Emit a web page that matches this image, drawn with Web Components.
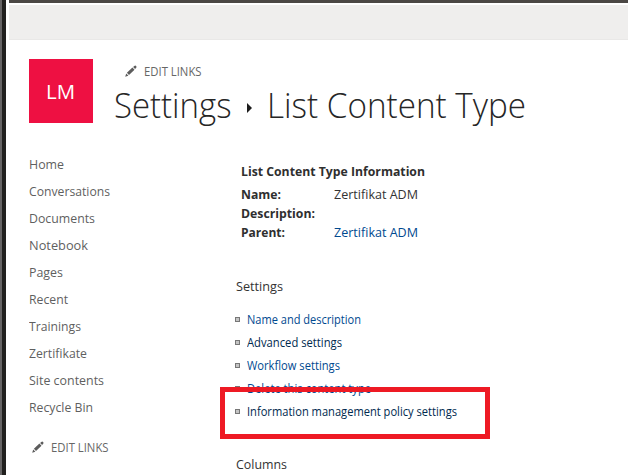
<!DOCTYPE html>
<html lang="en">
<head>
<meta charset="utf-8">
<title>List Content Type</title>
<style>
html,body{margin:0;height:100%;overflow:hidden;background:#fff}
body{font-family:"Open Sans","Noto Sans",sans-serif;font-size:12.8px;color:#333}
</style>
</head>
<body>
<settings-page></settings-page>
<script>
const define=(name,html,init)=>customElements.define(name,class extends HTMLElement{
  connectedCallback(){
    if(this.shadowRoot)return;
    this.attachShadow({mode:'open'}).innerHTML=html;
    if(init)init(this,this.shadowRoot);
  }
});

/* Text condensed or widened to an exact width */
define('fit-text',`<style>
:host{display:block;white-space:nowrap}
span{display:inline-block;transform-origin:0 50%}
</style><span><slot></slot></span>`,(el,root)=>{
  const w=+el.getAttribute('w'),s=root.querySelector('span');
  el.style.width=w+'px';
  s.style.transform='scaleX('+w/s.getBoundingClientRect().width+')';
});

define('edit-links',`<style>
:host{display:flex;align-items:center;height:16px;line-height:16px;font-size:11.8px;color:#666}
svg{display:block;width:12px;height:12px;margin-right:7px;flex:none}
</style>
<svg viewBox="0 0 12 12" fill="#5c5c5c"><path d="M0.2 11.7 1.2 8.5 3.4 10.8ZM1.9 7.8 7.4 2.6 9.5 4.7 4 10.1ZM8.1 2 9.3 0.9Q10.2 0.1 11.1 0.9 12 1.8 11.2 2.7L10.1 4Z"/></svg>
<fit-text w="57.5">EDIT LINKS</fit-text>`);

define('site-logo',`<style>
:host{display:flex;width:64px;height:64px;background:#ee1042;color:#fff;font-size:20.5px;line-height:64px;justify-content:center;flex:none;box-sizing:border-box;padding-right:2px}
</style><fit-text w="29">LM</fit-text>`);

define('window-edge',`<style>
:host{display:flex;width:9px;flex:none}
i:nth-child(1){width:3px;background:#11051a}
i:nth-child(2){width:2px;background:#666465}
i:nth-child(3){width:4px;background:#21201f}
</style><i></i><i></i><i></i>`);

define('top-bar',`<style>
:host{display:block;box-sizing:border-box;height:40px;border-top:3px solid #4b4744;padding-top:2px;background:#fff}
div{height:35px;box-sizing:border-box;background:#efeeed;border-bottom:1px solid #e9e8e7}
</style><div></div>`);

define('page-title',`<style>
:host{display:flex;align-items:center;font-weight:300;font-size:35.5px;line-height:48px;color:#262626;padding-top:1px}
svg{display:block;width:5px;height:10px;margin:7px 15px 0 15px}
</style><fit-text w="117.5">Settings</fit-text>
<svg viewBox="0 0 5 10"><path d="M0 0 5 5 0 10Z" fill="#1c1c1c"/></svg>
<fit-text w="259">List Content Type</fit-text>`);

define('side-nav',`<style>
:host{display:block;line-height:27px;color:#5f5f5f}
edit-links{margin:18px 0 0 3px}
</style>
<fit-text w="35">Home</fit-text><fit-text w="81">Conversations</fit-text><fit-text w="66">Documents</fit-text>
<fit-text w="59">Notebook</fit-text><fit-text w="34">Pages</fit-text><fit-text w="39">Recent</fit-text>
<fit-text w="52">Trainings</fit-text><fit-text w="58">Zertifikate</fit-text><fit-text w="75">Site contents</fit-text>
<fit-text w="64">Recycle Bin</fit-text><edit-links></edit-links>`);

define('type-info',`<style>
:host{display:grid;grid-template-columns:93px auto;line-height:19px}
.h{grid-column:1/3;line-height:23px;margin-bottom:2px}
.b{font-weight:700;color:#2f2f2f}
.a{color:#00498f}
</style>
<fit-text class="b h" w="184">List Content Type Information</fit-text>
<fit-text class="b" w="40">Name:</fit-text><fit-text w="84">Zertifikat ADM</fit-text>
<fit-text class="b" w="74">Description:</fit-text><span></span>
<fit-text class="b" w="44">Parent:</fit-text><fit-text class="a" w="84">Zertifikat ADM</fit-text>`);

define('bullet-link',`<style>
:host{display:flex;align-items:center;height:23px;line-height:23px;color:#00498f}
:host([dark]){color:#002a4f}
i{box-sizing:border-box;width:5px;height:5px;border:1px solid #777;background:#c4c4c4;margin:0 6.5px 0 0}
</style><i></i><slot></slot>`);

define('red-frame',`<style>
:host{position:absolute;left:220px;top:387px;width:270px;height:52px;box-sizing:border-box;border:5px solid #ee1a24}
</style>`);

define('settings-page',`<style>
:host{display:flex;height:475px;width:628px;overflow:hidden;position:relative}
main{flex:1;min-width:0}
header{display:flex;padding:19px 0 0 20px}
.head{margin-left:21px}
.head edit-links{margin:4px 0 0 11px}
.body{display:flex;padding-left:20px}
side-nav{width:207px;padding-top:23px;flex:none}
type-info{margin:32px 0 0 5px}
.sec{line-height:20px}
</style>
<window-edge></window-edge>
<main><top-bar></top-bar>
<header><site-logo></site-logo><div class="head"><edit-links></edit-links><page-title></page-title></div></header>
<div class="body"><side-nav></side-nav>
<section><type-info></type-info>
<fit-text class="sec" style="margin-top:34px" w="47">Settings</fit-text>
<div style="margin:12px 0 31px -1px">
<bullet-link><fit-text w="114">Name and description</fit-text></bullet-link>
<bullet-link dark><fit-text w="95">Advanced settings</fit-text></bullet-link>
<bullet-link><fit-text w="93">Workflow settings</fit-text></bullet-link>
<bullet-link><fit-text w="124">Delete this content type</fit-text></bullet-link>
<bullet-link dark><fit-text w="210">Information management policy settings</fit-text></bullet-link>
</div>
<fit-text class="sec" w="51">Columns</fit-text>
</section></div></main>
<red-frame></red-frame>`);
</script>
</body>
</html>
